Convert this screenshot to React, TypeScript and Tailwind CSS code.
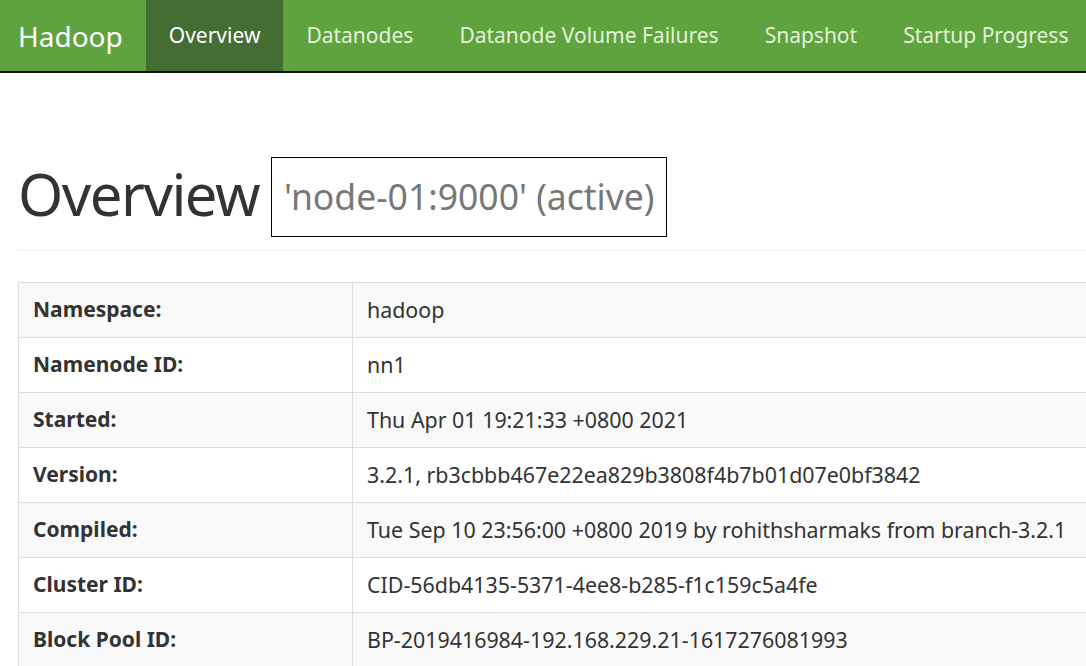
const rows: [string, string][] = [
  ["Namespace:", "hadoop"],
  ["Namenode ID:", "nn1"],
  ["Started:", "Thu Apr 01 19:21:33 +0800 2021"],
  ["Version:", "3.2.1, rb3cbbb467e22ea829b3808f4b7b01d07e0bf3842"],
  ["Compiled:", "Tue Sep 10 23:56:00 +0800 2019 by rohithsharmaks from branch-3.2.1"],
  ["Cluster ID:", "CID-56db4135-5371-4ee8-b285-f1c159c5a4fe"],
  ["Block Pool ID:", "BP-2019416984-192.168.229.21-1617276081993"],
];

const navItems = ["Overview", "Datanodes", "Datanode Volume Failures", "Snapshot", "Startup Progress"];

export default function App() {
  return (
    <div
      className="h-[666px] w-[1086px] overflow-hidden bg-white text-[#333]"
      style={{ fontFamily: '"Noto Sans", "Open Sans", sans-serif' }}
    >
      <header className="w-[1400px] h-[73px] bg-[#5fa33e] border-b-2 border-[#111] flex items-stretch">
        <div className="pl-[18px] pr-[23px] flex items-center text-[28px] text-white">Hadoop</div>
        <nav className="flex items-stretch text-[21px]">
          {navItems.map((item, i) => (
            <div
              key={item}
              className={
                i === 0
                  ? "px-[23px] flex items-center bg-[#446d33] text-white"
                  : "px-[23px] flex items-center text-[#e3f2d9]"
              }
            >
              {item}
            </div>
          ))}
        </nav>
      </header>

      <main className="w-[1400px] pl-[18px]">
        <div className="pt-[84px] pb-[13px] border-b border-[#eee] flex items-center gap-[12px]">
          <h1 className="text-[58px] leading-none font-normal tracking-[-1.5px] -mt-[6px]">Overview</h1>
          <div className="border border-black pl-[12px] pr-[12px] h-[80px] flex items-center text-[35.5px] text-[#777]">
            'node-01:9000' (active)
          </div>
        </div>

        <table className="mt-[31px] w-[1200px] border border-[#ddd] border-collapse">
          <tbody>
            {rows.map(([k, v], i) => (
              <tr key={k} className={i % 2 === 0 ? "bg-[#f9f9f9]" : "bg-white"}>
                <th className="w-[334px] h-[55px] border border-[#ddd] px-[14px] text-left font-bold text-[21px]">{k}</th>
                <td className="h-[55px] border border-[#ddd] px-[14px] text-[21.4px]">{v}</td>
              </tr>
            ))}
          </tbody>
        </table>
      </main>
    </div>
  );
}
